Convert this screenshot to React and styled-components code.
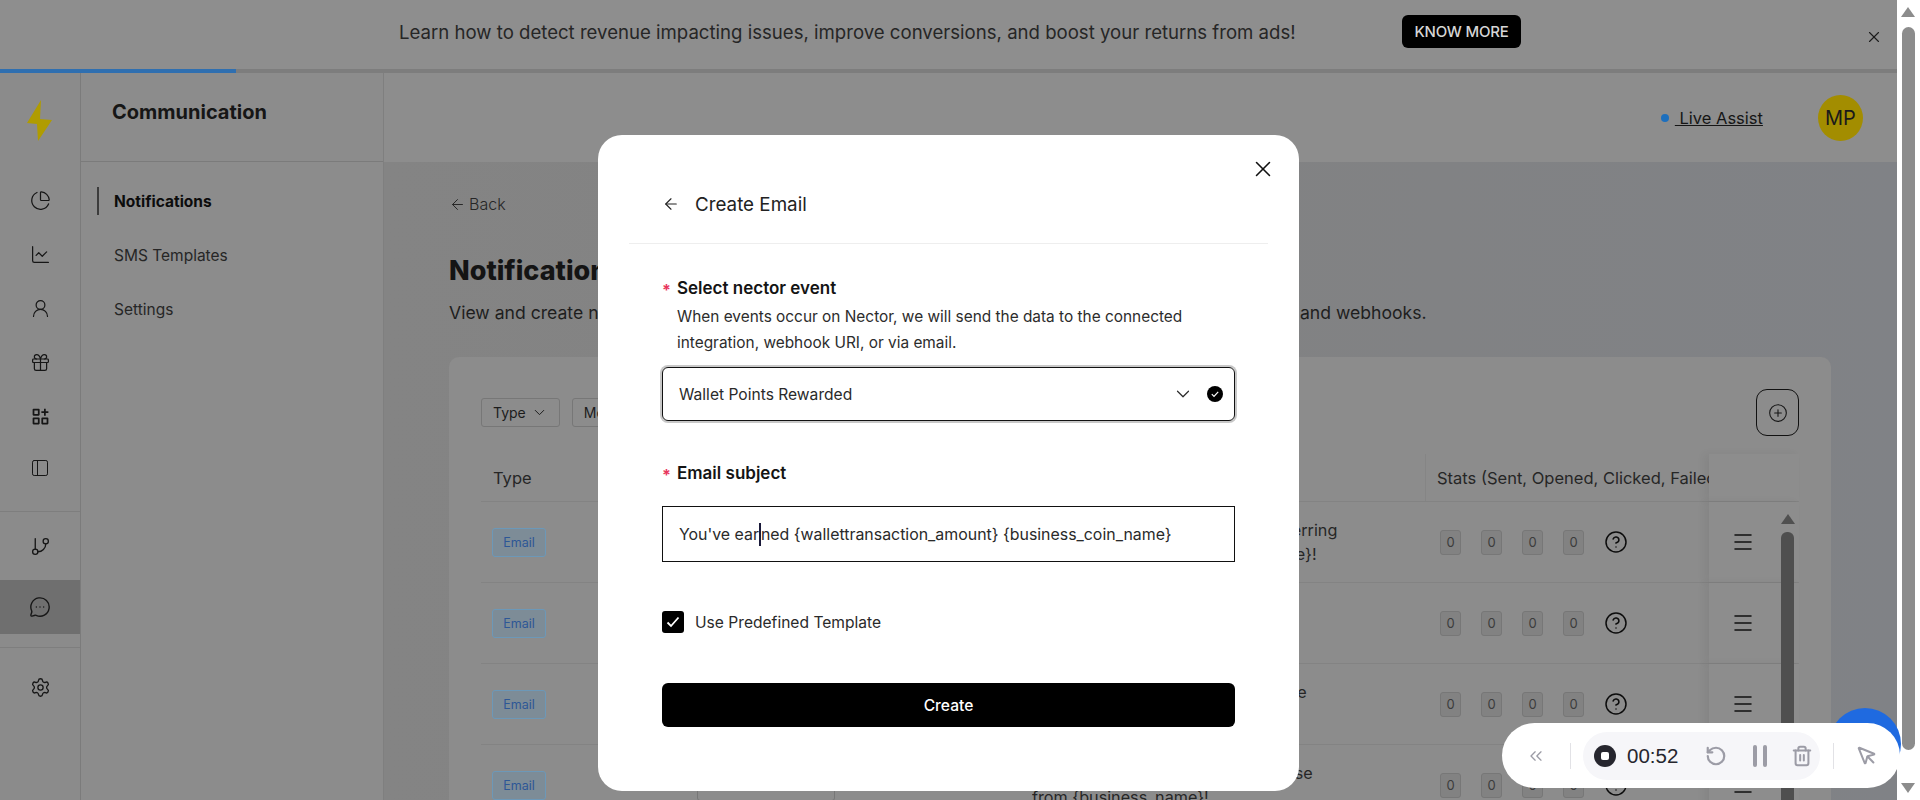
import styled, { createGlobalStyle } from "styled-components";
import {
  ArrowLeft,
  ChartLine,
  ChartPie,
  ChevronDown,
  ChevronsLeft,
  CircleHelp,
  CirclePlus,
  Gift,
  GitBranch,
  Menu,
  MessageCircleMore,
  MousePointer,
  PanelLeft,
  RotateCcw,
  Settings,
  Trash2,
  UserRound,
  X,
} from "lucide-react";
import { RiFunctionAddLine } from "react-icons/ri";

const GlobalStyle = createGlobalStyle`
  html, body {
    margin: 0;
    padding: 0;
    height: 800px;
    overflow: hidden;
    background: #fff;
  }

  * {
    box-sizing: border-box;
  }

  body {
    font-family: Inter, "Open Sans", sans-serif;
    color: #1c1c1c;
  }
`;

const Shell = styled.div`
  position: relative;
  display: flex;
  width: 1920px;
  height: 800px;
  overflow: hidden;
`;

const Page = styled.div`
  position: relative;
  display: flex;
  flex-direction: column;
  width: 1897px;
  height: 800px;
  overflow: hidden;
  background: #8c8c8c;
`;

const Banner = styled.div`
  display: flex;
  align-items: center;
  height: 69px;
  padding-left: 399px;
  flex-shrink: 0;
  position: relative;
  background: #8e8e8e;

  p {
    margin: 0 36px 6px 0;
    width: 967px;
    font-size: 18.6px;
    color: #262626;
    white-space: nowrap;
  }
`;

const KnowMore = styled.a`
  display: flex;
  align-items: center;
  justify-content: center;
  width: 119px;
  height: 33px;
  margin-bottom: 6px;
  border-radius: 6px;
  background: #000;
  color: #d6d6d6;
  font-size: 15px;
  font-weight: 500;
  letter-spacing: -0.2px;
`;

const BannerClose = styled.span`
  position: absolute;
  left: 1865px;
  top: 28px;
  display: flex;
  color: #1c1c1c;
`;

const Progress = styled.div`
  height: 4px;
  flex-shrink: 0;
  background: #7d7d7d;

  div {
    width: 236px;
    height: 100%;
    background: #2f6fb0;
  }
`;

const Body = styled.div`
  display: flex;
  flex: 1;
  min-height: 0;
`;

const Rail = styled.nav`
  display: flex;
  flex-direction: column;
  align-items: center;
  width: 81px;
  flex-shrink: 0;
  border-right: 1px solid #7b7b7b;
  background: #8b8b8b;
`;

const Logo = styled.svg`
  display: block;
  margin: 27px 0 31px;
`;

const RailItem = styled.div`
  display: flex;
  align-items: center;
  justify-content: center;
  width: 100%;
  height: ${(p) => p.$h || 54}px;
  color: #161616;
  background: ${(p) => (p.$active ? "#6f6f6f" : "transparent")};
`;

const RailRule = styled.div`
  width: 100%;
  height: 1px;
  background: #7e7e7e;
  margin: ${(p) => p.$m};
`;

const SubNav = styled.aside`
  width: 303px;
  flex-shrink: 0;
  border-right: 1px solid #7f7f7f;
  background: #8c8c8c;
`;

const SubHead = styled.div`
  display: flex;
  align-items: center;
  height: 89px;
  padding: 0 0 11px 31px;
  border-bottom: 1px solid #7b7b7b;
  font-size: 20px;
  font-weight: 700;
  color: #161616;
`;

const SubItems = styled.div`
  display: flex;
  flex-direction: column;
  padding-top: 12px;
`;

const SubItem = styled.div`
  position: relative;
  display: flex;
  align-items: center;
  height: 54px;
  padding-left: 33px;
  font-size: 15.5px;
  font-weight: ${(p) => (p.$active ? 700 : 400)};
  color: ${(p) => (p.$active ? "#0c0c0c" : "#262626")};

  &::before {
    content: "";
    display: ${(p) => (p.$active ? "block" : "none")};
    position: absolute;
    left: 16px;
    top: 13px;
    width: 2px;
    height: 28px;
    background: #3c3c3c;
  }
`;

const Main = styled.main`
  display: flex;
  flex-direction: column;
  flex: 1;
  min-width: 0;
`;

const TopBar = styled.header`
  display: flex;
  align-items: center;
  height: 89px;
  flex-shrink: 0;
  padding: 0 34px 0 1277px;
  background: #8d8d8d;
`;

const LiveDot = styled.span`
  width: 8px;
  height: 8px;
  border-radius: 50%;
  background: #1d6fbd;
  margin-right: 6px;
`;

const LiveLink = styled.a`
  width: 91px;
  font-size: 16.5px;
  color: #161616;
  text-decoration: underline;
  white-space: pre;
`;

const Avatar = styled.div`
  display: flex;
  align-items: center;
  justify-content: center;
  width: 46px;
  height: 46px;
  margin-left: 54px;
  border-radius: 50%;
  background: #a38d00;
  font-size: 20px;
  color: #1a1a1a;
`;

const Content = styled.div`
  flex: 1;
  min-height: 0;
  padding: 31px 65px 0 65px;
  background: linear-gradient(90deg, #848484, #828282 40%, #808286);
`;

const BackLink = styled.div`
  display: flex;
  align-items: center;
  gap: 3px;
  height: 22px;
  padding-left: 0;
  font-size: 16px;
  font-weight: 300;
  color: #262626;
`;

const Title = styled.h1`
  margin: 36px 0 0;
  font-size: 27px;
  line-height: 40px;
  font-weight: 800;
  color: #141414;
  white-space: nowrap;
`;

const Lead = styled.p`
  margin: 9px 0 0;
  font-size: 17.6px;
  line-height: 26px;
  white-space: nowrap;
  color: #1e1e1e;
`;

const Card = styled.section`
  width: 1382px;
  height: 600px;
  margin-top: 31px;
  padding: 32px 32px 0;
  border-radius: 10px;
  background: #8c8c8c;
`;

const Toolbar = styled.div`
  display: flex;
  align-items: center;
  gap: 12px;
  height: 47px;
  margin-bottom: 18px;
`;

const Filter = styled.div`
  display: flex;
  align-items: center;
  gap: 5px;
  height: 29px;
  padding: 0 11px;
  border: 1px solid #777;
  border-radius: 3px;
  font-size: 14px;
  color: #1c1c1c;
`;

const AddButton = styled.div`
  display: flex;
  align-items: center;
  justify-content: center;
  width: 43px;
  height: 47px;
  margin-left: auto;
  border: 1px solid #111;
  border-radius: 11px;
  color: #161616;
`;

const Table = styled.div`
  position: relative;
  width: 1318px;
`;

const Row = styled.div`
  display: grid;
  grid-template-columns: 216px 335px 393px 284px 90px;
  height: ${(p) => p.$h}px;
  border-bottom: 1px solid #838383;
`;

const Cell = styled.div`
  display: flex;
  align-items: center;
  padding-left: ${(p) => p.$pad || 0}px;
  overflow: hidden;
  white-space: nowrap;
`;

const HeadCell = styled(Cell)`
  font-size: 16.5px;
  font-weight: 400;
  color: #262626;
  border-left: ${(p) => (p.$line ? "1px solid #858585" : "none")};
`;

const ActionCell = styled(Cell)`
  padding-left: 22px;
  color: #111;
  background: #8d8d8d;
  box-shadow: -5px 0 8px rgba(0, 0, 0, 0.05);
`;

const TypeBadge = styled.span`
  display: flex;
  align-items: center;
  justify-content: center;
  width: 54px;
  height: 29px;
  border: 1px solid #6c98b8;
  border-radius: 3px;
  background: #7d8c97;
  font-size: 12.5px;
  color: #2d5796;
`;

const EventBadge = styled.span`
  display: flex;
  align-items: center;
  height: 32px;
  padding: 0 11px;
  border: 1px solid #777;
  border-radius: 3px;
  font-size: 14.6px;
  color: #1c1c1c;
`;

const Subject = styled.div`
  font-size: 16.2px;
  line-height: 24px;
  color: #262626;
`;

const Stats = styled.div`
  display: flex;
  align-items: center;
  gap: 20px;
  padding-left: 15px;
  color: #0c0c0c;
`;

const StatBox = styled.span`
  display: flex;
  align-items: center;
  justify-content: center;
  width: 21px;
  height: 25px;
  border: 1px solid #777;
  border-radius: 3px;
  background: #828282;
  font-size: 13px;
  color: #3c3c3c;
`;

const Scroller = styled.div`
  position: absolute;
  left: 1300px;
  top: 60px;
  display: flex;
  flex-direction: column;
  align-items: center;
  gap: 8px;
  width: 13px;
`;

const ScrollUp = styled.div`
  width: 0;
  height: 0;
  border-left: 7px solid transparent;
  border-right: 7px solid transparent;
  border-bottom: 10px solid #505050;
`;

const ScrollThumb = styled.div`
  width: 13px;
  height: 400px;
  border-radius: 6px;
  background: #4f4f4f;
`;

const Modal = styled.div`
  position: absolute;
  left: 598px;
  top: 135px;
  width: 701px;
  height: 656px;
  padding: 50px 31px 0;
  border-radius: 24px;
  background: #fff;
`;

const ModalClose = styled.span`
  position: absolute;
  left: 652px;
  top: 21px;
  display: flex;
  color: #111;
`;

const ModalHead = styled.div`
  display: flex;
  align-items: center;
  gap: 15px;
  height: 59px;
  padding: 0 0 20px 33px;
  border-bottom: 1px solid #eee;
  font-size: 18.8px;
  color: #222;
`;

const Form = styled.div`
  display: flex;
  flex-direction: column;
  padding: 0 33px;
`;

const Label = styled.div`
  display: flex;
  align-items: center;
  height: 24px;
  margin-top: ${(p) => p.$top}px;
  font-size: 17px;
  font-weight: 600;
  color: #141414;

  i {
    width: 15px;
    margin-top: 4px;
    font-style: normal;
    font-size: 16px;
    font-weight: 700;
    color: #e8365d;
  }
`;

const Hint = styled.p`
  width: 560px;
  margin: 4px 0 11px;
  padding-left: 15px;
  font-size: 15.4px;
  line-height: 26px;
  color: #2c2c2c;
`;

const SelectBox = styled.div`
  display: flex;
  align-items: center;
  height: 54px;
  padding: 0 11px 0 16px;
  border: 1.5px solid #111;
  border-radius: 6px;
  box-shadow: 0 0 0 2px #c8c8c8;
  font-size: 15.6px;
  color: #2a2a2a;

  span {
    flex: 1;
  }
`;

const SelectCheck = styled.svg`
  margin-left: 13px;
`;

const InputBox = styled.div`
  display: flex;
  align-items: center;
  height: 56px;
  margin-top: 21px;
  padding: 0 38px 0 16px;
  border: 1.5px solid #111;
  font-size: 15.9px;
  color: #2a2a2a;
`;

const InputText = styled.div`
  width: 518px;
  overflow: hidden;
  white-space: nowrap;
`;

const Caret = styled.span`
  display: inline-block;
  width: 0;
  height: 23px;
  vertical-align: -6px;
  border-left: 2px solid #1a1a3a;
`;

const CheckRow = styled.div`
  display: flex;
  align-items: center;
  gap: 11px;
  height: 22px;
  margin-top: 49px;
  font-size: 15.6px;
  color: #2a2a2a;
`;

const CheckMark = styled.span`
  display: flex;
  align-items: center;
  justify-content: center;
  width: 22px;
  height: 22px;
  border-radius: 3px;
  background: #000;
`;

const CreateButton = styled.button`
  height: 44px;
  margin-top: 50px;
  border: 0;
  border-radius: 6px;
  background: #000;
  color: #fff;
  font: 500 15.6px Inter, sans-serif;
`;

const Gutter = styled.div`
  position: relative;
  flex: 1;
  background: #fff;
`;

const GutterArrow = styled.div`
  position: absolute;
  left: 4px;
  top: ${(p) => p.$top}px;
  width: 0;
  height: 0;
  border-left: 7px solid transparent;
  border-right: 7px solid transparent;
  ${(p) => (p.$down ? "border-top: 10px solid #8c8c8c;" : "border-bottom: 10px solid #8c8c8c;")}
`;

const GutterThumb = styled.div`
  position: absolute;
  left: 5px;
  top: 27px;
  width: 13px;
  height: 723px;
  border-radius: 7px;
  background: #8c8c8c;
`;

const HelpBubble = styled.div`
  position: absolute;
  left: 1829px;
  top: 708px;
  width: 72px;
  height: 72px;
  border-radius: 50%;
  background: #1f6ae0;
`;

const Recorder = styled.div`
  position: absolute;
  left: 1502px;
  top: 723px;
  display: flex;
  align-items: center;
  width: 398px;
  height: 65px;
  border-radius: 33px;
  background: #fff;
  color: #9c9ca6;
`;

const RecorderBack = styled.span`
  display: flex;
  justify-content: center;
  width: 68px;
`;

const RecorderRule = styled.span`
  width: 1px;
  height: 26px;
  background: #e2e2e6;
`;

const RecorderGroup = styled.div`
  display: flex;
  align-items: center;
  width: 237px;
  height: 48px;
  margin: 0 13px 0 12px;
  padding-left: 11px;
  border-radius: 24px;
  background: #f6f6f9;
`;

const StopButton = styled.span`
  display: flex;
  align-items: center;
  justify-content: center;
  width: 22px;
  height: 22px;
  border-radius: 50%;
  background: #26262e;

  &::after {
    content: "";
    width: 8px;
    height: 8px;
    border-radius: 2px;
    background: #fff;
  }
`;

const Timer = styled.span`
  width: 70px;
  margin-left: 11px;
  font-family: "Liberation Sans", sans-serif;
  font-size: 20.5px;
  color: #26262e;
`;

const RecorderIcon = styled.span`
  display: flex;
  justify-content: center;
  width: ${(p) => p.$w}px;
`;

const PauseBars = styled.span`
  display: flex;
  gap: 6px;

  &::before,
  &::after {
    content: "";
    width: 4px;
    height: 22px;
    border-radius: 2px;
    background: #9c9ca6;
  }
`;

const railIcons = [ChartPie, ChartLine, UserRound, Gift];

const rows = [
  {
    event: "Wallet Points Rewarded",
    lines: ["You've earned rewards just for referring", "your friends to join {business_name}!"],
  },
  {
    event: "Coupon Rewarded",
    lines: ["A coupon has been just added to", "your account"],
  },
  {
    event: "Review is Created",
    lines: ["Thank you for sharing your valuable", "feedback with us"],
  },
  {
    event: "Order is Created",
    lines: ["Thank you for making your purchase", "from {business_name}!"],
  },
];

const App = () => {
  return (
    <Shell>
      <GlobalStyle />
      <Page>
        <Banner>
          <p>Learn how to detect revenue impacting issues, improve conversions, and boost your returns from ads!</p>
          <KnowMore>KNOW MORE</KnowMore>
          <BannerClose>
            <X size={18} strokeWidth={1.5} />
          </BannerClose>
        </Banner>
        <Progress>
          <div />
        </Progress>
        <Body>
          <Rail>
            <Logo width="26" height="42" viewBox="0 0 26 42">
              <polygon points="14,0 0,23 10,24 11,41 25,20 13,19" fill="#b09c00" />
            </Logo>
            {railIcons.map((Icon, ind) => (
              <RailItem key={ind}>
                <Icon size={21} strokeWidth={1.4} />
              </RailItem>
            ))}
            <RailItem>
              <RiFunctionAddLine size={21} />
            </RailItem>
            <RailItem $h={50}>
              <PanelLeft size={20} strokeWidth={1.2} />
            </RailItem>
            <RailRule $m="18px 0 0" />
            <RailItem $h={68}>
              <GitBranch size={21} strokeWidth={1.5} />
            </RailItem>
            <RailItem $active>
              <MessageCircleMore size={22} strokeWidth={1.5} />
            </RailItem>
            <RailRule $m="13px 0 0" />
            <RailItem $h={78}>
              <Settings size={21} strokeWidth={1.5} />
            </RailItem>
          </Rail>
          <SubNav>
            <SubHead>Communication</SubHead>
            <SubItems>
              <SubItem $active>Notifications</SubItem>
              <SubItem>SMS Templates</SubItem>
              <SubItem>Settings</SubItem>
            </SubItems>
          </SubNav>
          <Main>
            <TopBar>
              <LiveDot />
              <LiveLink> Live Assist</LiveLink>
              <Avatar>MP</Avatar>
            </TopBar>
            <Content>
              <BackLink>
                <ArrowLeft size={17} strokeWidth={1.4} />
                Back
              </BackLink>
              <Title>Notifications</Title>
              <Lead>View and create notifications for the events that occur on Nector, and send them through emails, SMS and webhooks.</Lead>
              <Card>
                <Toolbar>
                  <Filter>
                    Type <ChevronDown size={17} strokeWidth={1.4} />
                  </Filter>
                  <Filter>
                    More <ChevronDown size={17} strokeWidth={1.4} />
                  </Filter>
                  <AddButton>
                    <CirclePlus size={20} strokeWidth={1.3} />
                  </AddButton>
                </Toolbar>
                <Table>
                  <Row $h={48}>
                    <HeadCell $pad={12}>Type</HeadCell>
                    <HeadCell>Event</HeadCell>
                    <HeadCell>Subject</HeadCell>
                    <HeadCell $line $pad={11}>Stats (Sent, Opened, Clicked, Failed)</HeadCell>
                    <ActionCell />
                  </Row>
                  {rows.map((row) => (
                    <Row
                      key={row.event}
                      $h={81}>
                      <Cell $pad={11}>
                        <TypeBadge>Email</TypeBadge>
                      </Cell>
                      <Cell>
                        <EventBadge>{row.event}</EventBadge>
                      </Cell>
                      <Cell>
                        <Subject>
                          {row.lines[0]}
                          <br />
                          {row.lines[1]}
                        </Subject>
                      </Cell>
                      <Cell>
                        <Stats>
                          {[0, 1, 2, 3].map((ind) => (
                            <StatBox key={ind}>0</StatBox>
                          ))}
                          <CircleHelp size={24} strokeWidth={1.5} />
                        </Stats>
                      </Cell>
                      <ActionCell>
                        <Menu size={24} strokeWidth={1.5} />
                      </ActionCell>
                    </Row>
                  ))}
                  <Scroller>
                    <ScrollUp />
                    <ScrollThumb />
                  </Scroller>
                </Table>
              </Card>
            </Content>
          </Main>
        </Body>
        <Modal>
          <ModalClose>
            <X size={26} strokeWidth={1.4} />
          </ModalClose>
          <ModalHead>
            <ArrowLeft size={18} strokeWidth={1.5} />
            Create Email
          </ModalHead>
          <Form>
            <Label $top={32}>
              <i>*</i>Select nector event
            </Label>
            <Hint>When events occur on Nector, we will send the data to the connected integration, webhook URI, or via email.</Hint>
            <SelectBox>
              <span>Wallet Points Rewarded</span>
              <ChevronDown size={22} strokeWidth={1.3} />
              <SelectCheck width="16" height="16" viewBox="0 0 16 16">
                <circle cx="8" cy="8" r="8" fill="#000" />
                <path d="M4.8 8.2l2.2 2.2 4.2-4.6" fill="none" stroke="#fff" strokeWidth="1.2" />
              </SelectCheck>
            </SelectBox>
            <Label $top={40}>
              <i>*</i>Email subject
            </Label>
            <InputBox>
              <InputText>
                You've ear
                <Caret />
                ned {"{wallettransaction_amount}"} {"{business_coin_name}"}
              </InputText>
            </InputBox>
            <CheckRow>
              <CheckMark>
                <svg width="14" height="12" viewBox="0 0 14 12">
                  <path d="M1.5 6.5l3.5 3.5 7.5-8.5" fill="none" stroke="#fff" strokeWidth="1.8" />
                </svg>
              </CheckMark>
              Use Predefined Template
            </CheckRow>
            <CreateButton>Create</CreateButton>
          </Form>
        </Modal>
      </Page>
      <Gutter>
        <GutterArrow $top={7} />
        <GutterThumb />
        <GutterArrow
          $top={783}
          $down
        />
      </Gutter>
      <HelpBubble />
      <Recorder>
        <RecorderBack>
          <ChevronsLeft size={20} strokeWidth={1.6} />
        </RecorderBack>
        <RecorderRule />
        <RecorderGroup>
          <StopButton />
          <Timer>00:52</Timer>
          <RecorderIcon $w={38}>
            <RotateCcw size={22} strokeWidth={2.4} />
          </RecorderIcon>
          <RecorderIcon $w={50}>
            <PauseBars />
          </RecorderIcon>
          <RecorderIcon $w={34}>
            <Trash2 size={22} strokeWidth={2.2} />
          </RecorderIcon>
        </RecorderGroup>
        <RecorderRule />
        <RecorderIcon $w={66}>
          <MousePointer size={22} strokeWidth={2.2} />
        </RecorderIcon>
      </Recorder>
    </Shell>
  );
};

export default App;
